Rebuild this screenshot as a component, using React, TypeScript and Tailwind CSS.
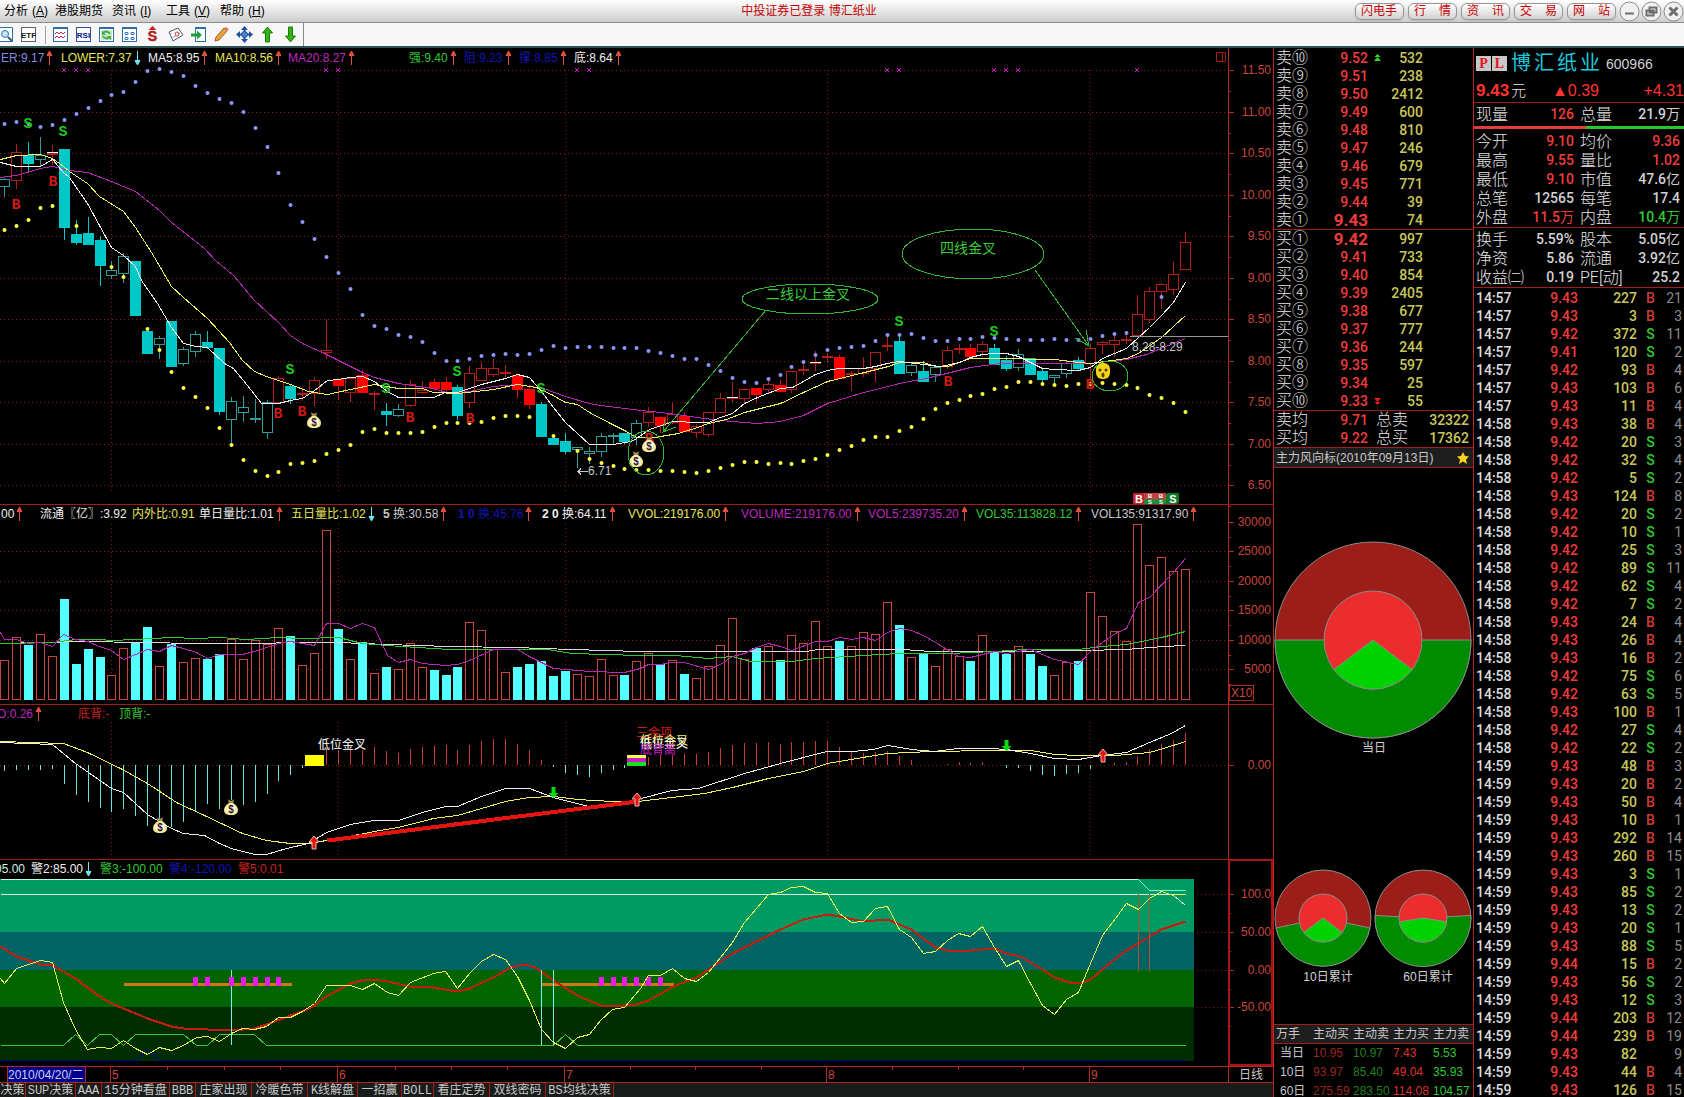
import type { ReactNode } from 'react'

type Kind = 'u' | 'h' | 'c' | 'r'
type Candle = [Kind, number, number, number, number]

const RED = '#b4281e'
const GRID = '#7d1c14'
const MONTHS = [9, 28, 47, 69, 91]

const barX = (i: number) => Math.round(4.1 + i * 11.93)

// kind, high, body top, body bottom, low
const candles: Candle[] = [
  ['h', 178, 179, 187, 197], ['u', 144, 152, 181, 189], ['c', 142, 155, 164, 172], ['h', 137, 155, 160, 167], ['u', 145, 153, 154, 165],
  ['c', 149, 149, 228, 240], ['c', 220, 234, 243, 245], ['c', 217, 233, 245, 245], ['c', 236, 240, 266, 286], ['h', 261, 270, 276, 279],
  ['h', 253, 256, 274, 283], ['c', 261, 261, 316, 316], ['c', 328, 331, 354, 354], ['h', 336, 338, 345, 359], ['c', 321, 321, 367, 367],
  ['h', 347, 349, 364, 366], ['h', 331, 334, 352, 357], ['c', 331, 342, 348, 349], ['c', 348, 348, 412, 415], ['h', 397, 401, 420, 445],
  ['h', 396, 407, 413, 422], ['h', 399, 418, 419, 423], ['h', 400, 402, 433, 439], ['u', 376, 378, 403, 403], ['c', 384, 386, 399, 404],
  ['u', 387, 393, 394, 401], ['u', 377, 380, 394, 406], ['u', 319, 350, 353, 359], ['r', 379, 379, 386, 400], ['u', 378, 378, 393, 402],
  ['r', 370, 375, 393, 393], ['u', 391, 393, 395, 410], ['c', 403, 411, 415, 426], ['h', 404, 409, 416, 417], ['u', 380, 384, 406, 407],
  ['u', 381, 390, 393, 394], ['r', 379, 382, 389, 391], ['r', 377, 382, 390, 393], ['c', 385, 387, 416, 420], ['u', 366, 373, 403, 408],
  ['u', 362, 368, 381, 381], ['u', 359, 368, 375, 377], ['u', 365, 372, 373, 379], ['r', 373, 375, 390, 398], ['r', 385, 389, 405, 409],
  ['c', 402, 404, 437, 437], ['c', 436, 438, 445, 445], ['c', 433, 441, 452, 454], ['h', 447, 447, 450, 468], ['h', 447, 451, 454, 464],
  ['h', 433, 436, 452, 457], ['h', 433, 435, 436, 444], ['c', 433, 433, 442, 444], ['h', 420, 423, 438, 445], ['u', 407, 412, 423, 427],
  ['r', 416, 417, 426, 433], ['u', 403, 414, 423, 424], ['r', 412, 416, 432, 432], ['u', 424, 426, 433, 438], ['u', 412, 412, 435, 437],
  ['u', 393, 398, 413, 413], ['u', 382, 397, 398, 402], ['u', 389, 389, 399, 402], ['r', 388, 388, 395, 403], ['u', 381, 384, 390, 393],
  ['r', 380, 385, 392, 392], ['u', 371, 371, 390, 393], ['u', 363, 369, 371, 375], ['u', 351, 362, 363, 371], ['u', 353, 356, 358, 363],
  ['r', 355, 357, 379, 379], ['u', 371, 373, 374, 391], ['u', 357, 368, 374, 377], ['u', 352, 352, 369, 382], ['u', 334, 345, 346, 351],
  ['c', 337, 341, 374, 374], ['h', 363, 365, 373, 376], ['c', 361, 371, 382, 382], ['h', 367, 367, 375, 382], ['u', 346, 350, 367, 369],
  ['u', 344, 348, 349, 354], ['r', 344, 348, 357, 357], ['u', 341, 344, 352, 357], ['c', 344, 348, 365, 365], ['c', 356, 360, 369, 371],
  ['h', 349, 354, 368, 371], ['c', 358, 358, 375, 375], ['c', 368, 371, 380, 382], ['h', 375, 375, 378, 383], ['h', 361, 363, 374, 378],
  ['c', 357, 360, 369, 371], ['u', 344, 348, 364, 388], ['u', 341, 342, 345, 354], ['u', 336, 340, 345, 357], ['u', 334, 339, 340, 344],
  ['u', 295, 314, 336, 336], ['u', 287, 291, 320, 323], ['u', 283, 284, 292, 309], ['u', 262, 274, 290, 295], ['u', 232, 242, 270, 270],
]

const upperDots = [
  124, 122, 124, 127, 125, 120, 114, 108, 101, 95, 92, 82, 71, 69, 72, 76, 86, 93, 99, 103, 112, 128, 147, 173, 205, 222, 239, 257, 273, 289,
  315, 326, 329, 335, 337, 342, 353, 361, 361, 359, 356, 355, 354, 355, 354, 350, 346, 348, 347, 347, 347, 348, 348, 348, 351, 353, 356, 359,
  359, 365, 371, 378, 382, 383, 379, 375, 367, 362, 355, 350, 348, 347, 346, 341, 335, 335, 334, 338, 341, 341, 339, 339, 337, 338, 339, 340,
  340, 340, 339, 340, 340, 339, 336, 334, 333, 0, 0, 297,
]

const lowerDots = [
  230, 226, 220, 208, 206, 0, 226, 0, 0, 267, 277, 0, 329, 350, 372, 388, 397, 408, 428, 445, 460, 471, 476, 472, 464, 463, 461, 454, 450, 445,
  432, 429, 433, 433, 433, 432, 427, 423, 423, 423, 422, 418, 416, 416, 417, 0, 436, 0, 451, 459, 463, 466, 469, 470, 470, 471, 471, 472, 473,
  471, 468, 465, 462, 462, 464, 463, 464, 461, 459, 455, 450, 446, 440, 437, 437, 431, 427, 419, 409, 403, 400, 396, 394, 389, 387, 382, 382,
  384, 385, 386, 384, 384, 383, 384, 385, 388, 395, 398, 403, 412,
]

const ma5 =
  '0,162 16,166 40,166 52,159 63,172 69,177 87,203 99,225 111,247 123,255 135,266 141,280 157,303 171,327 183,343 196,346 207,347 224,363 233,368 247,385 261,403 278,403 290,400 302,398 314,390 327,380 338,379 350,377 362,376 374,381 387,391 398,397 410,397 433,397 445,392 457,392 469,388 481,384 505,378 517,374 529,377 541,391 553,407 565,422 577,433 589,444 612,444 631,441 636,438 649,429 673,421 697,422 708,422 720,417 732,413 744,403 757,397 780,388 792,387 803,381 815,374 827,370 839,368 863,368 875,366 887,363 899,361 923,364 940,366 959,362 970,357 982,354 994,353 1006,353 1018,356 1030,362 1042,368 1054,369 1078,370 1090,367 1102,358 1126,348 1138,337 1149,327 1161,315 1173,302 1185,282'
const ma10 =
  '0,159 16,155 40,154 52,158 63,166 69,171 87,183 99,196 123,211 135,227 151,252 157,262 171,286 183,297 207,318 229,342 242,360 254,371 266,376 290,384 308,391 327,394 350,389 374,384 398,388 422,388 433,392 457,393 493,389 517,384 535,387 551,394 565,402 577,404 589,412 612,424 626,431 636,437 654,437 678,433 697,427 708,423 726,419 744,412 780,403 803,392 827,381 860,373 888,366 899,362 923,362 935,366 947,366 970,358 994,358 1054,359 1078,362 1090,363 1126,358 1138,353 1161,337 1185,315'
const ma20 =
  '0,177 16,175 40,168 52,166 69,170 87,172 111,181 135,191 159,210 171,222 204,248 215,260 233,275 254,300 278,322 290,335 302,343 326,354 362,372 374,377 398,383 433,388 449,393 469,391 493,386 517,384 543,388 565,396 589,403 600,405 640,410 661,412 697,417 720,420 757,423 780,421 803,415 827,403 860,393 899,383 930,377 970,367 999,363 1042,363 1066,363 1090,363 1126,359 1146,354 1185,338'

// bar tops
const volumes = [
  660, 637, 645, 634, 656, 599, 664, 649, 657, 675, 648, 642, 627, 666, 644, 662, 658, 659, 654, 639, 659, 640, 644, 628, 636, 665, 653, 530,
  629, 659, 642, 673, 667, 669, 643, 667, 670, 675, 667, 622, 630, 649, 672, 667, 664, 661, 676, 671, 674, 676, 659, 675, 675, 661, 653, 664,
  660, 674, 678, 666, 645, 618, 659, 648, 646, 660, 635, 643, 621, 646, 641, 646, 632, 634, 602, 625, 657, 653, 666, 649, 656, 661, 635, 652,
  654, 646, 654, 666, 675, 662, 661, 592, 616, 631, 641, 524, 565, 557, 571, 569,
]
const fallingVolumes = new Set([
  2, 5, 6, 7, 8, 11, 12, 14, 17, 18, 24, 28, 30, 32, 36, 37, 38, 43, 44, 45, 46, 47, 52, 55, 57, 63, 65, 70, 75, 77, 81, 83, 84, 86, 87, 90,
])

const vol5 =
  '0,632 4,639 16,639 28,643 40,642 52,646 63,634 75,639 87,641 99,646 111,650 123,659 135,654 147,649 159,651 171,645 183,648 196,652 207,658 219,654 242,654 254,651 266,647 278,643 290,641 314,645 326,623 338,623 350,628 362,623 374,627 387,655 398,662 410,659 422,663 445,665 457,664 469,660 493,649 517,649 529,656 553,668 589,671 624,672 640,668 648,664 660,664 672,662 684,662 708,669 720,664 732,656 744,653 756,647 768,643 780,646 791,650 815,641 827,641 839,637 851,639 863,637 875,640 887,632 899,628 911,630 923,635 935,642 958,656 970,657 994,651 1006,653 1030,649 1054,659 1078,664 1090,651 1102,642 1115,633 1126,628 1138,602 1149,597 1173,572 1185,558'
const vol35 =
  '0,643 52,642 75,639 99,639 111,640 135,639 171,637 196,638 220,637 245,639 278,637 302,638 338,637 362,643 386,645 449,649 490,649 547,649 571,653 640,655 675,655 708,658 732,656 750,661 791,661 815,658 863,655 899,653 948,653 994,651 1024,649 1078,649 1102,646 1126,644 1161,637 1185,631'
const vol135 =
  '0,643 82,641 143,642 196,643 261,643 290,642 338,642 386,644 449,646 514,647 571,649 640,651 805,651 818,649 902,649 931,651 999,651 1083,650 1125,649 1163,646 1185,645'

// histogram ends, 0 for none
const macdBars = [
  771, 770, 770, 770, 769, 784, 795, 802, 808, 812, 809, 816, 826, 820, 827, 822, 811, 804, 809, 800, 805, 802, 794, 781, 775, 768, 0, 749, 750,
  750, 750, 747, 751, 753, 749, 747, 746, 745, 750, 745, 741, 739, 739, 744, 750, 760, 767, 773, 775, 777, 773, 770, 768, 0, 757, 755, 755, 754,
  754, 752, 748, 745, 743, 743, 742, 744, 742, 742, 741, 741, 747, 752, 753, 752, 751, 756, 760, 0, 0, 764, 762, 763, 762, 0, 768, 768, 771,
  775, 776, 774, 773, 769, 0, 763, 762, 756, 749, 744, 740, 733,
]
const dif =
  '0,742 52,744 75,763 111,788 123,792 147,814 171,828 183,833 204,835 219,843 231,848 254,854 266,854 286,848 308,843 326,832 350,824 374,820 398,820 422,812 445,806 457,806 481,796 505,788 529,788 553,797 588,806 612,804 637,799 671,790 698,788 744,773 780,763 826,751 852,751 873,749 887,745 911,749 934,751 957,748 990,748 1006,749 1030,753 1054,758 1078,759 1102,755 1126,752 1149,742 1171,733 1185,725'
const dea =
  '0,741 63,743 87,752 122,769 147,783 176,802 204,815 242,833 266,840 290,843 308,843 338,838 374,831 398,827 433,818 457,815 481,808 505,801 529,797 553,796 577,799 612,801 637,801 671,797 704,793 732,787 768,778 803,771 827,763 868,756 887,753 931,751 990,750 1030,750 1054,754 1078,755 1115,755 1149,752 1163,748 1185,741'

const cciSlow =
  '0,946 16,956 40,964 52,965 75,978 99,996 111,1003 123,1008 147,1018 171,1026 183,1028 207,1029 231,1030 254,1028 266,1024 290,1015 302,1011 314,1005 326,996 350,983 362,980 374,979 387,981 410,986 433,987 457,991 469,988 493,977 510,967 524,964 535,967 553,980 577,995 600,1005 620,1006 636,1004 648,1000 673,986 696,977 732,953 744,947 780,929 803,919 827,914 839,916 863,921 887,919 911,929 935,947 946,950 970,950 994,948 1006,953 1020,956 1030,962 1042,969 1054,977 1072,983 1083,982 1090,979 1102,969 1115,958 1126,950 1149,936 1161,929 1185,921'
const cciFast =
  '0,978 4,983 16,968 40,960 52,962 63,1002 75,1029 87,1049 99,1047 111,1048 123,1040 135,1048 147,1054 159,1047 171,1050 183,1045 196,1037 207,1036 219,1041 231,1033 242,1028 254,1029 266,1026 278,1017 290,1017 302,1011 314,1003 326,985 338,985 350,985 362,989 374,983 387,992 398,995 410,982 433,973 445,971 457,988 469,973 481,961 493,954 505,959 517,976 529,1000 541,1029 553,1042 565,1048 577,1037 589,1034 600,1020 612,1009 624,1007 640,988 648,975 660,975 672,968 684,978 696,981 708,972 732,942 744,922 768,894 780,892 791,887 803,886 815,892 827,893 839,913 851,922 863,921 875,908 887,906 899,929 911,937 923,953 935,951 947,940 958,933 970,936 982,926 994,947 1006,966 1018,960 1030,983 1042,1005 1054,1014 1066,999 1078,992 1090,963 1102,935 1115,918 1126,903 1138,909 1149,898 1161,891 1173,895'
const signalLine =
  '0,1045 63,1045 75,1034 87,1045 99,1034 111,1034 123,1045 135,1034 183,1034 196,1045 207,1045 219,1034 254,1034 266,1045 553,1045 565,1034 577,1045 1185,1045'

function Grid({ ys, top, bottom, from = 0 }: { ys: number[]; top: number; bottom: number; from?: number }) {
  return (
    <g stroke={GRID} strokeDasharray="1 3">
      {ys.map((y) => <line key={y} x1={from} x2="1228" y1={y + 0.5} y2={y + 0.5} />)}
      {from === 0 && MONTHS.map((m) => <line key={m} x1={barX(m) + 0.5} x2={barX(m) + 0.5} y1={top} y2={bottom} />)}
    </g>
  )
}

function Axis({ labels, top, bottom, half }: { labels: [number, string][]; top: number; bottom: number; half: number }) {
  return (
    <g>
      <line x1="1228.5" x2="1228.5" y1={top} y2={bottom} stroke={RED} />
      {labels.map(([y, text]) => (
        <g key={text}>
          <line x1="1228" x2="1234" y1={y + 0.5} y2={y + 0.5} stroke={RED} />
          {half > 0 && <line x1="1228" x2="1231" y1={y + half + 0.5} y2={y + half + 0.5} stroke={RED} />}
          <text x="1271" y={y + 4} textAnchor="end" fontSize="12" fill="#c8463c">{text}</text>
        </g>
      ))}
    </g>
  )
}

function Line({ points, color, width = 1 }: { points: string; color: string; width?: number }) {
  return <polyline points={points} transform="translate(0.5 0.5)" fill="none" stroke={color} strokeWidth={width} />
}

function MoneyBag({ x, y }: { x: number; y: number }) {
  return (
    <g transform={`translate(${x - 7} ${y - 8})`} shapeRendering="auto">
      <path d="M4 0.5 L7 2 L10 0.5 L9 4 L5 4 Z" fill="#b9a06a" stroke="#6e5a28" strokeWidth="0.5" />
      <path d="M5 4 h4 c3 2 5 4 5 7 c0 3-2 5-7 5 s-7-2-7-5 c0-3 2-5 5-7z" fill="#f3ec9a" />
      <circle cx="7" cy="10" r="4" fill="#fff" />
      <text x="7" y="14" textAnchor="middle" fontSize="10" fontWeight="700" fill="#3c1414">$</text>
    </g>
  )
}

function UpMark({ x, y }: { x: number; y: number }) {
  return <path d={`M${x} ${y - 6} l5 6 h-3 v7 h-4 v-7 h-3 z`} fill="#e6140a" stroke="#f0b4b4" shapeRendering="auto" />
}

function DownMark({ x, y }: { x: number; y: number }) {
  return <path d={`M${x + 0.5} ${y + 5} l-5 -5 h3 v-6 h4 v6 h3 z`} fill="#00dc14" shapeRendering="auto" />
}

function CandleShape({ c, i }: { c: Candle; i: number }) {
  const [kind, high, top, bottom, low] = c
  const x = barX(i)
  const stroke = kind === 'u' ? '#b41e16' : kind === 'r' ? '#ff0000' : kind === 'c' ? '#00c8c8' : '#2f9c9c'
  const filled = kind === 'c' || kind === 'r'
  return (
    <g>
      <line x1={x + 0.5} x2={x + 0.5} y1={high} y2={low} stroke={kind === 'r' ? '#d21410' : stroke} />
      {filled ? (
        <rect x={x - 5} y={top} width="11" height={bottom - top} fill={stroke} />
      ) : bottom - top < 2 ? (
        <line x1={x - 5} x2={x + 6} y1={top + 0.5} y2={top + 0.5} stroke={stroke} strokeWidth="2" />
      ) : (
        <rect x={x - 4.5} y={top + 0.5} width="10" height={bottom - top - 1} fill="#000" stroke={stroke} />
      )}
    </g>
  )
}

function PriceChart() {
  const levels = Array.from({ length: 11 }, (_, i): [number, string] => [Math.round(70.3 + i * 41.5), (11.5 - i * 0.5).toFixed(2)])
  const sells = [[28, 123], [63, 131], [290, 369], [386, 388], [457, 371], [541, 388], [899, 321], [994, 331]]
  const buys = [[16, 204], [53, 181], [278, 413], [302, 411], [410, 417], [470, 418], [649, 438], [948, 381], [1090, 384]]
  return (
    <svg viewBox="0 68 1273 436" className="block h-auto w-full shrink-0 overflow-visible" shapeRendering="crispEdges">
      <Grid ys={levels.map((l) => l[0])} top={70} bottom={494} />
      <Axis labels={levels} top={68} bottom={504} half={21} />

      {candles.map((c, i) => <CandleShape key={i} c={c} i={i} />)}
      <Line points={ma20} color="#b428b4" />
      <Line points={ma10} color="#f0f064" />
      <Line points={ma5} color="#f0f0f0" />
      {[[52, 152], [732, 397], [815, 362]].map(([x, y]) => (
        <line key={x} x1={x - 5} x2={x + 6} y1={y + 0.5} y2={y + 0.5} stroke="#fff" />
      ))}

      <g fill="#8c96ff" shapeRendering="auto">
        {upperDots.map((y, i) => y > 0 && <circle key={i} cx={barX(i) + 0.5} cy={y} r="2" />)}
      </g>
      <g fill="#ffff46" shapeRendering="auto">
        {lowerDots.map((y, i) => y > 0 && <circle key={i} cx={barX(i) + 0.5} cy={y} r="2" />)}
      </g>
      <g stroke="#c81ec8">
        {[5, 6, 7, 27, 28, 48, 49, 74, 75, 83, 84, 85, 95].map((i) => (
          <path key={i} d={`M${barX(i) - 2} 68 l4 4 m0 -4 l-4 4`} shapeRendering="auto" />
        ))}
      </g>

      <g className="font-['Liberation_Mono',monospace]" fontSize="15" fontWeight="700" textAnchor="middle">
        {sells.map(([x, y]) => <text key={x} x={x} y={y + 5} fill="#1ec81e">S</text>)}
        {buys.map(([x, y]) => <text key={x} x={x} y={y + 5} fill="#d21914">B</text>)}
      </g>

      <line x1="1130" x2="1228" y1="336.5" y2="336.5" stroke="#969696" />
      <text x="1132" y="351" fontSize="12" fill="#c8c8c8">8.28-8.29</text>
      <path d="M578 471.5 h10 m-7 -3 l-3 3 l3 3" fill="none" stroke="#c8c8c8" />
      <text x="588" y="475" fontSize="12" fill="#c8c8c8">6.71</text>

      <MoneyBag x={314} y={420} />
      <MoneyBag x={636} y={459} />
      <g shapeRendering="auto">
        <rect x="1096" y="363" width="14" height="16" rx="6" fill="#f5d214" />
        <circle cx="1100" cy="370" r="1.5" fill="#503c00" />
        <circle cx="1106" cy="370" r="1.5" fill="#503c00" />
        <ellipse cx="1103" cy="375" rx="1.5" ry="2.5" fill="#503c00" />
      </g>
      <MoneyBag x={649} y={444} />

      <g fill="none" stroke="#32b432">
        <ellipse cx="973" cy="254" rx="71" ry="25" />
        <ellipse cx="810" cy="299" rx="68" ry="15" />
        <ellipse cx="646" cy="453" rx="18" ry="22" />
        <ellipse cx="1110" cy="376" rx="18" ry="15" />
        <path d="M766 310 L663 432 M665 419 L663 432 L676 427" />
        <path d="M1035 270 L1089 346 M1086 330 L1089 346 L1075 338" />
      </g>
      <g fill="#3cc83c" fontSize="14">
        <text x="940" y="253">四线金叉</text>
        <text x="766" y="299">二线以上金叉</text>
      </g>

      <g fontWeight="700" fill="#fff" textAnchor="middle">
        <rect x="1133" y="493" width="11" height="11" fill="#c81e28" />
        <rect x="1144" y="493" width="11" height="6" fill="#c83c46" />
        <rect x="1155" y="493" width="11" height="6" fill="#c83c46" />
        <rect x="1144" y="499" width="22" height="5" fill="#1e8c3c" />
        <rect x="1166" y="493" width="13" height="11" rx="2" fill="#0a7828" />
        <text x="1139" y="503" fontSize="11">B</text>
        <text x="1150" y="498" fontSize="6">B</text>
        <text x="1161" y="498" fontSize="6">B</text>
        <text x="1150" y="504" fontSize="6">S</text>
        <text x="1161" y="504" fontSize="6">S</text>
        <text x="1173" y="503" fontSize="11">S</text>
      </g>
    </svg>
  )
}

function VolumeChart() {
  return (
    <svg viewBox="0 522 1273 182" className="block h-auto w-full shrink-0 overflow-visible" shapeRendering="crispEdges">
      <Grid ys={[551, 581, 610, 640, 669]} top={524} bottom={700} />
      <Axis
        labels={[[522, '30000'], [551, '25000'], [581, '20000'], [610, '15000'], [640, '10000'], [669, '5000']]}
        top={522}
        bottom={704}
        half={15}
      />
      {volumes.map((y, i) =>
        fallingVolumes.has(i) ? (
          <rect key={i} x={barX(i) - 4} y={y} width="9" height={700 - y} fill="#54ffff" />
        ) : (
          <rect key={i} x={barX(i) - 3.5} y={y + 0.5} width="8" height={699 - y} fill="#000" stroke="#c8463c" />
        ),
      )}
      <Line points={vol135} color="#dcdcdc" />
      <Line points={vol35} color="#32c832" />
      <Line points={vol5} color="#b428b4" />
      <rect x="1229.5" y="685.5" width="24" height="15" fill="none" stroke={RED} />
      <text x="1231" y="697" fontSize="12" fill="#c8463c">X10</text>
    </svg>
  )
}

function MacdChart() {
  return (
    <svg viewBox="0 722 1273 137" className="block h-auto w-full shrink-0" shapeRendering="crispEdges">
      <Grid ys={[765]} top={722} bottom={858} />
      <Axis labels={[[765, '0.00']]} top={722} bottom={859} half={0} />
      {macdBars.map((y, i) => y > 0 && (
        <line key={i} x1={barX(i) + 0.5} x2={barX(i) + 0.5} y1="765" y2={y} stroke={y > 765 ? '#6ee1e1' : '#c83c32'} />
      ))}
      <Line points={dea} color="#f0f064" />
      <Line points={dif} color="#f0f0f0" />
      <Line points="327,840 637,801" color="#e6140f" width={4} />
      <rect x="305" y="755" width="19" height="11" fill="#ffff00" />
      <rect x="627" y="755" width="19" height="3" fill="#ffff46" />
      <rect x="627" y="758" width="19" height="4" fill="#c81ec8" />
      <rect x="627" y="762" width="19" height="4" fill="#1edc1e" />
      <g fontSize="12">
        <text x="318" y="749" fill="#fff">低位金叉</text>
        <text x="636" y="737" fill="#d21914">三金项</text>
        <text x="640" y="745" fill="#f0f064">低位金叉</text>
        <text x="640" y="748" fill="#fff">低位金叉</text>
        <text x="640" y="754" fill="#c81ec8">底背离</text>
      </g>
      <MoneyBag x={160} y={825} />
      <MoneyBag x={231} y={807} />
      <UpMark x={314} y={842} />
      <UpMark x={637} y={799} />
      <UpMark x={1103} y={755} />
      <DownMark x={553} y={793} />
      <DownMark x={1006} y={746} />
    </svg>
  )
}

function CciChart() {
  return (
    <svg viewBox="0 877 1273 189" className="block h-auto w-full shrink-0 overflow-visible" shapeRendering="crispEdges">
      <rect x="0" y="879" width="1194" height="53" fill="#009b62" />
      <rect x="0" y="932" width="1194" height="38" fill="#006464" />
      <rect x="0" y="970" width="1194" height="37" fill="#006400" />
      <rect x="0" y="1007" width="1194" height="54" fill="#002d00" />
      <Grid ys={[894, 932, 970, 1007]} top={877} bottom={1066} from={1197} />
      <Axis labels={[[894, '100.0'], [932, '50.00'], [970, '0.00'], [1007, '-50.00']]} top={877} bottom={1066} half={19} />
      <rect x="1229" y="860" width="43" height="205" fill="none" stroke="#aa1414" strokeWidth="2" />

      <Line points="0,894 1185,894" color="#d2f0e1" />
      <Line points="0,879 1138,879" color="#c8f5e1" />
      <Line points="1138,879 1149,890 1185,890" color="#6ef5c8" />
      <Line points="1173,894 1185,894" color="#f0f064" />
      <Line points="0,1060 135,1060 147,1049 159,1060 1185,1060" color="#000a8c" />
      <Line points={signalLine} color="#3cc83c" />
      <Line points="123,984 291,984" color="#cd7814" width={3} />
      <Line points="541,984 673,984" color="#cd7814" width={3} />
      <Line points={cciSlow} color="#c31e0f" width={2} />
      <g stroke="#78f0e6">
        {[231, 541, 553].map((x) => <line key={x} x1={x + 0.5} x2={x + 0.5} y1="970" y2="1045" />)}
      </g>
      <g stroke="#b45032">
        {[1138, 1149].map((x) => <line key={x} x1={x + 0.5} x2={x + 0.5} y1="894" y2="971" />)}
      </g>
      <g fill="#e61ee6">
        {[16, 17, 19, 20, 21, 22, 23, 50, 51, 52, 53, 54, 55].map((i) => (
          <rect key={i} x={barX(i) - 2} y="977" width="5" height="9" />
        ))}
      </g>
      <Line points={cciFast} color="#e6f050" />
      <Line points="1173,895 1185,905" color="#d2f0e1" />
    </svg>
  )
}

function DateScale() {
  return (
    <svg viewBox="0 1066 1273 17" className="block h-auto w-full shrink-0 overflow-visible" shapeRendering="crispEdges" fontSize="12">
      <path d="M0 1066.5 H1273 M0 1082.5 H1273 M1228.5 1066 V1083" stroke={RED} />
      <g stroke={RED}>
        {[167, 224, 280, 395, 451, 507, 630, 695, 761, 892, 958, 1023].map((x) => (
          <line key={x} x1={x + 0.5} x2={x + 0.5} y1="1066" y2="1070" />
        ))}
      </g>
      {MONTHS.map((m, i) => (
        <g key={m}>
          <line x1={barX(m) - 0.5} x2={barX(m) - 0.5} y1="1066" y2="1083" stroke={RED} />
          <text x={barX(m) + 1} y="1079" fill="#c8463c">{i + 5}</text>
        </g>
      ))}
      <rect x="7.5" y="1066.5" width="78" height="16" fill="#00008c" stroke={RED} />
      <text x="8" y="1079" fill="#c8d2ff">2010/04/20/二</text>
      <text x="1239" y="1079" fill="#c8c8c8">日线</text>
    </svg>
  )
}

interface Reading {
  text: ReactNode
  color: string
  width: string
  arrow?: 'up' | 'down'
}

const priceReadings: Reading[] = [
  { text: 'ER:9.17', color: 'text-[#828cdc]', width: 'w-[60px]', arrow: 'up' },
  { text: 'LOWER:7.37', color: 'text-[#e6e65a]', width: 'w-[87px]', arrow: 'down' },
  { text: 'MA5:8.95', color: 'text-[#f0f0f0]', width: 'w-[67px]', arrow: 'up' },
  { text: 'MA10:8.56', color: 'text-[#e6e65a]', width: 'w-[73px]', arrow: 'up' },
  { text: 'MA20:8.27', color: 'text-[#be28be]', width: 'w-[121px]', arrow: 'up' },
  { text: '强:9.40', color: 'text-[#32c832]', width: 'w-[55px]', arrow: 'up' },
  { text: '阻:9.23', color: 'text-[#1414b4]', width: 'w-[55px]', arrow: 'up' },
  { text: '撑:8.85', color: 'text-[#1414b4]', width: 'w-[55px]', arrow: 'up' },
  { text: '底:8.64', color: 'text-[#f0f0f0]', width: 'w-[55px]', arrow: 'up' },
]

const volumeReadings: Reading[] = [
  { text: '00', color: 'text-[#f0f0f0]', width: 'w-[39px]', arrow: 'up' },
  { text: '流通〖亿〗:3.92', color: 'text-[#f0f0f0]', width: 'w-[92px]' },
  { text: '内外比:0.91', color: 'text-[#e6e65a]', width: 'w-[67px]' },
  { text: '单日量比:1.01', color: 'text-[#f0f0f0]', width: 'w-[92px]', arrow: 'up' },
  { text: '五日量比:1.02', color: 'text-[#e6e65a]', width: 'w-[92px]', arrow: 'down' },
  { text: <><b>5 </b>换:30.58</>, color: 'text-[#c8c8c8]', width: 'w-[75px]', arrow: 'up' },
  { text: <><b>1 0 </b>换:45.76</>, color: 'text-[#1414b4]', width: 'w-[84px]', arrow: 'up' },
  { text: <><b>2 0 </b>换:64.11</>, color: 'text-[#f0f0f0]', width: 'w-[86px]', arrow: 'up' },
  { text: 'VVOL:219176.00', color: 'text-[#e6e65a]', width: 'w-[113px]', arrow: 'up' },
  { text: 'VOLUME:219176.00', color: 'text-[#be28be]', width: 'w-[127px]', arrow: 'up' },
  { text: 'VOL5:239735.20', color: 'text-[#be28be]', width: 'w-[108px]', arrow: 'up' },
  { text: 'VOL35:113828.12', color: 'text-[#32c832]', width: 'w-[115px]', arrow: 'up' },
  { text: 'VOL135:91317.90', color: 'text-[#c8c8c8]', width: 'w-[115px]', arrow: 'up' },
]

const macdReadings: Reading[] = [
  { text: 'O:0.26', color: 'text-[#be28be]', width: '-ml-1 w-[81px]', arrow: 'up' },
  { text: '底背:-', color: 'text-[#c8231e]', width: 'w-[41px]' },
  { text: '顶背:-', color: 'text-[#32c832]', width: 'w-[41px]' },
]

const cciReadings: Reading[] = [
  { text: '05.00', color: 'text-[#c8f0e1]', width: '-ml-1.5 w-[36px]' },
  { text: '警2:85.00', color: 'text-[#f0f0f0]', width: 'w-[69px]', arrow: 'down' },
  { text: '警3:-100.00', color: 'text-[#32c832]', width: 'w-[69px]' },
  { text: '警4:-120.00', color: 'text-[#1414b4]', width: 'w-[69px]' },
  { text: '警5:0.01', color: 'text-[#c8231e]', width: 'w-[69px]' },
]

function Trend({ dir }: { dir: 'up' | 'down' }) {
  return dir === 'up' ? (
    <svg width="7" height="14" className="shrink-0"><path d="M3.5 14 V4 M3.5 0 L1 4.5 H6 Z" stroke="#e0503c" fill="#e0503c" strokeWidth="1" /></svg>
  ) : (
    <svg width="7" height="14" className="shrink-0"><path d="M3.5 0 V10 M3.5 14 L1 9.5 H6 Z" stroke="#6ee6f0" fill="#6ee6f0" strokeWidth="1" /></svg>
  )
}

function Readings({ items, first = false }: { items: Reading[]; first?: boolean }) {
  return (
    <div className={first ? 'flex h-5 shrink-0' : 'flex h-[18px] shrink-0 border-t border-[#a01e14]'}>
      <div className="flex min-w-0 flex-1 items-center overflow-hidden pl-px leading-4">
        {items.map((r, i) => (
          <div key={i} className={`flex shrink-0 items-center gap-0.5 whitespace-nowrap ${r.width} ${r.color}`}>
            <span>{r.text}</span>
            {r.arrow && <Trend dir={r.arrow} />}
          </div>
        ))}
      </div>
      {first && (
        <svg width="10" height="10" className="mt-1 mr-0.5 shrink-0">
          <path d="M0.5 0.5 H9.5 V9.5 H0.5 Z M6.5 0 V10" fill="none" stroke="#a01e14" />
        </svg>
      )}
      <div className="w-[45px] border-l border-[#b4281e]" />
    </div>
  )
}

const menus: [string, string, string][] = [
  ['分析', 'A', 'w-[51px]'],
  ['港股期货', '', 'w-[57px]'],
  ['资讯', 'I', 'w-[54px]'],
  ['工具', 'V', 'w-[54px]'],
  ['帮助', 'H', 'w-[54px]'],
]

function MenuBar() {
  return (
    <div className="flex h-[23px] shrink-0 items-center justify-between border-b border-[#8c8c8c] bg-gradient-to-b from-white to-[#cdcdcd] pl-1 text-black">
      <nav className="flex flex-1 leading-5">
        {menus.map(([label, key, width]) => (
          <button key={label} className={`text-left whitespace-nowrap ${width}`}>
            {label}
            {key && <span className="pl-1">(<u>{key}</u>)</span>}
          </button>
        ))}
      </nav>
      <div className="pr-[68px] leading-5 text-[#c80000]">中投证券已登录 博汇纸业</div>
      <div className="flex flex-1 items-center justify-end gap-1 pr-0.5">
        {['闪电手', '行情', '资讯', '交易', '网站'].map((t) => (
          <button
            key={t}
            className="flex h-[17px] w-[49px] shrink-0 items-center justify-between rounded-md border border-[#969696] bg-gradient-to-b from-white to-[#d2d2d2] px-[5px] leading-4 whitespace-nowrap text-[#c80000] shadow-sm"
          >
            {t.length === 2 ? [...t].map((ch) => <span key={ch}>{ch}</span>) : t}
          </button>
        ))}
        <WindowButton label="最小化"><path d="M6 12.5 H15" /></WindowButton>
        <WindowButton label="还原"><path d="M8.5 6.5 H15.5 V11.5 H8.5 Z M5.5 9.5 H12.5 V14.5 H5.5 Z" fill="#e6e6e6" /></WindowButton>
        <WindowButton label="关闭"><path d="M6.5 6.5 L14.5 14.5 M14.5 6.5 L6.5 14.5" strokeWidth="3" /></WindowButton>
      </div>
    </div>
  )
}

function WindowButton({ label, children }: { label: string; children: ReactNode }) {
  return (
    <button aria-label={label} className="h-[21px] w-[18px] shrink-0">
      <svg width="21" height="21" className="-ml-px">
        <circle cx="10.5" cy="10.5" r="9.5" fill="#f0f0f0" stroke="#8c8c8c" />
        <g stroke="#6e6e6e" strokeWidth="2" fill="none">{children}</g>
      </svg>
    </button>
  )
}

function Frame({ children }: { children?: ReactNode }) {
  return (
    <>
      <rect x="1.5" y="1.5" width="14" height="14" fill="#fff" stroke="#2d6eaa" />
      <rect x="1" y="1" width="15" height="2" fill="#2d6eaa" />
      {children}
    </>
  )
}

const toolIcons: [string, ReactNode][] = [
  ['ETF', <><rect x="1.5" y="1.5" width="14" height="14" fill="#fff" stroke="#5a6478" /><text x="8.5" y="12" textAnchor="middle" fontSize="8" fontWeight="700" fill="#281414">ETF</text></>],
  ['走势', <Frame><path d="M3 8 l2 -2 2 2 2 -2 2 2 2 -2 M3 12 l2 -2 2 2 2 -2 2 2 2 -2" fill="none" stroke="#b42850" /></Frame>],
  ['RSI', <><rect x="1.5" y="1.5" width="14" height="14" fill="#fff" stroke="#2d50aa" /><text x="8.5" y="12" textAnchor="middle" fontSize="8" fontWeight="700" fill="#0a1478">RSI</text></>],
  ['刷新', <Frame><rect x="3" y="4" width="11" height="10" fill="#c8e6c8" /><path d="M12 8 a4 3.5 0 0 0 -7 -1 M5 10 a4 3.5 0 0 0 7 1" fill="none" stroke="#46aa50" strokeWidth="2" /><path d="M4 5 v4 h4 z M13 14 v-4 h-4 z" fill="#46aa50" /></Frame>],
  ['列表', <Frame><path d="M4 6.5 h3 v2 h-3 z M10 6.5 h3 v2 h-3 z M4 11.5 h3 v2 h-3 z M10 11.5 h3 v2 h-3 z" fill="#fff" stroke="#3c78b4" /></Frame>],
  ['交易', <><path d="M8.5 0 l4 4 h-8 z" fill="#c81e1e" /><text x="8.5" y="15" textAnchor="middle" fontSize="14" fontWeight="700" fill="#c81e1e" stroke="#961414" strokeWidth="0.5">S</text></>],
  ['信件', <><path d="M2 6 L11 2 L16 9 L6 15 Z" fill="#fff" stroke="#505a82" /><path d="M3 8 l2 -1 M5 12 l8 -5" fill="none" stroke="#a0aac8" /><circle cx="10" cy="8" r="2" fill="#fff" stroke="#d23c3c" /></>],
  ['转到', <><rect x="5.5" y="1.5" width="10" height="14" fill="#fff" stroke="#2d6eaa" /><rect x="5" y="1" width="11" height="2" fill="#2d6eaa" /><path d="M1 7.5 h6 v-3 l5 4.5 -5 4.5 v-3 h-6 z" fill="#1ea03c" /></>],
  ['画线', <><path d="M2 15 l1 -4 8 -9 3 3 -8 9 z" fill="#e6a03c" stroke="#a0641e" /><path d="M11 2 l3 3 2 -2 -3 -2 z" fill="#e67878" /></>],
  ['移动', <><path d="M8.5 0 l3.500 4 h-7 z M8.5 17 l3.500 -4 h-7 z M0 8.5 l4 -3.500 v7 z M17 8.5 l-4 -3.500 v7 z" fill="#1e50a0" /><path d="M8.5 4 V13 M4 8.5 H13" stroke="#1e50a0" strokeWidth="2" /><circle cx="8.5" cy="8.5" r="3" fill="#5082c8" stroke="#1e50a0" /></>],
  ['上移', <path d="M8.5 1 l5 6 h-3 v9 h-4 v-9 h-3 z" fill="#32b414" stroke="#1e780a" />],
  ['下移', <path d="M8.5 16 l5 -6 h-3 v-9 h-4 v9 h-3 z" fill="#32b414" stroke="#1e780a" />],
]

function ToolBar() {
  return (
    <div className="flex h-[25px] shrink-0 items-center border-b-2 border-[#2d5050] bg-[#f7f7f7]">
      <button aria-label="查询" className="w-[14px]">
        <svg width="14" height="17">
          <path d="M-2 1.5 H12.5 V15.5 H-2" fill="#fff" stroke="#2d6eaa" />
          <circle cx="5" cy="8" r="3.5" fill="#c8e1f5" stroke="#2878aa" />
          <path d="M8 11 l4 4" stroke="#3c5a78" strokeWidth="2" />
        </svg>
      </button>
      {toolIcons.map(([name, icon], i) => (
        <div key={name} className="flex items-center">
          <button aria-label={name} className="ml-1.5 w-[17px]">
            <svg width="17" height="17">{icon}</svg>
          </button>
          {i === 0 && <div className="ml-2 h-[18px] w-px bg-[#a0a0a0]" />}
        </div>
      ))}
      <div className="ml-1 h-full w-px bg-[#8c8c8c]" />
    </div>
  )
}

const tabs: [string, string][] = [
  ['决策', 'w-[26px]'], ['SUP决策', 'w-[50px]'], ['AAA', 'w-[26px]'], ['15分钟看盘', 'w-[68px]'], ['BBB', 'w-[26px]'], ['庄家出现', 'w-[56px]'],
  ['冷暖色带', 'w-[56px]'], ['K线解盘', 'w-[50px]'], ['一招赢', 'w-[44px]'], ['BOLL', 'w-[32px]'], ['看庄定势', 'w-[56px]'], ['双线密码', 'w-[56px]'],
  ['BS均线决策', 'w-[68px]'],
]

function TabStrip() {
  return (
    <div className="flex min-h-[14px] flex-1 overflow-hidden bg-[#191c1a] font-['Liberation_Mono','Noto_Sans_CJK_SC',monospace] text-[#c8c8c8]">
      {tabs.map(([name, width]) => (
        <button key={name} className={`flex h-4 justify-center border-r border-[#a01e14] leading-4 whitespace-nowrap ${width}`}>
          {name}
        </button>
      ))}
    </div>
  )
}

const sellRows: [string, string, number][] = [
  ['⑩', '9.52', 532], ['⑨', '9.51', 238], ['⑧', '9.50', 2412], ['⑦', '9.49', 600], ['⑥', '9.48', 810],
  ['⑤', '9.47', 246], ['④', '9.46', 679], ['③', '9.45', 771], ['②', '9.44', 39], ['①', '9.43', 74],
]
const buyRows: [string, string, number][] = [
  ['①', '9.42', 997], ['②', '9.41', 733], ['③', '9.40', 854], ['④', '9.39', 2405], ['⑤', '9.38', 677],
  ['⑥', '9.37', 777], ['⑦', '9.36', 244], ['⑧', '9.35', 597], ['⑨', '9.34', 25], ['⑩', '9.33', 55],
]

function Depth({ side, rows }: { side: string; rows: [string, string, number][] }) {
  return (
    <table className="w-full table-fixed font-['Roboto','Noto_Sans_CJK_SC',sans-serif] text-sm leading-[18px] font-medium">
      <tbody>
        {rows.map(([level, price, volume]) => (
          <tr key={level} className="h-[18px]">
            <td className="w-[44px] p-0 pl-0.5 text-base leading-[18px] font-light whitespace-nowrap text-[#e6e6e6]">{side}{level}</td>
            <td className={`w-[50px] p-0 text-right text-[#f03c3c] ${level === '①' ? 'text-[17px] leading-[18px] font-bold' : ''}`}>{price}</td>
            <td className="w-[16px] p-0">
              {level === '⑩' && (
                <svg width="7" height="8" className={side === '卖' ? 'ml-1.5' : 'ml-1.5 rotate-180'}>
                  <path d="M3.5 0 L6.5 3 H0.5 Z M3.5 3 L7 7 H0 Z" fill={side === '卖' ? '#32dc32' : '#e61e14'} />
                </svg>
              )}
            </td>
            <td className="w-[39px] p-0 text-right text-[#c8c85a]">{volume}</td>
            <td />
          </tr>
        ))}
      </tbody>
    </table>
  )
}

const point = (cx: number, cy: number, r: number, deg: number) => {
  const a = (deg * Math.PI) / 180
  return `${(cx + r * Math.cos(a)).toFixed(1)} ${(cy + r * Math.sin(a)).toFixed(1)}`
}

// green sector opens downward, spanning from `start` to 180 - start degrees
function sector(cx: number, cy: number, r: number, start: number) {
  const large = 180 - 2 * start > 180 ? 1 : 0
  return `M${cx} ${cy} L${point(cx, cy, r, start)} A${r} ${r} 0 ${large} 1 ${point(cx, cy, r, 180 - start)} Z`
}

function Donut({ cx, cy, r, outer, inner }: { cx: number; cy: number; r: number; outer: number; inner: number }) {
  return (
    <g stroke="#8c8c8c">
      <circle cx={cx} cy={cy} r={r} fill="#9b1e19" />
      <path d={sector(cx, cy, r, outer)} fill="#008c00" />
      <circle cx={cx} cy={cy} r={Math.round(r / 2)} fill="#eb2d2d" />
      <path d={sector(cx, cy, Math.round(r / 2), inner)} fill="#00d200" />
    </g>
  )
}

function OrderPanel() {
  return (
    <section className="flex w-[200px] shrink-0 flex-col border-l border-[#b4281e] pt-px">
      <Depth side="卖" rows={sellRows} />
      <div className="h-px shrink-0 bg-[#a01e14]" />
      <Depth side="买" rows={buyRows} />
      <table className="w-full border-y border-[#a01e14] font-['Roboto','Noto_Sans_CJK_SC',sans-serif] text-sm leading-[18px] font-medium">
        <tbody>
          {[['卖均', '9.71', '总卖', 32322], ['买均', '9.22', '总买', 17362]].map(([a, price, b, total]) => (
            <tr key={a} className="h-[18px]">
              <td className="w-[44px] p-0 pl-0.5 text-base leading-[18px] font-light text-[#e6e6e6]">{a}</td>
              <td className="w-[50px] p-0 text-right text-[#f03c3c]">{price}</td>
              <td className="p-0 pl-2 text-base leading-[18px] font-light text-[#e6e6e6]">{b}</td>
              <td className="w-[56px] p-0 pr-1 text-right text-[#c8c85a]">{total}</td>
            </tr>
          ))}
        </tbody>
      </table>
      <div className="flex h-5 shrink-0 items-center justify-between border-b border-[#a01e14] bg-[#1e1e1e] pr-1 pl-0.5 text-[#c8c8c8]">
        <h2 className="whitespace-nowrap">主力风向标(2010年09月13日)</h2>
        <svg width="12" height="12"><path d="M6 0 L8 4 L12 4.5 L9 7.5 L10 12 L6 9.5 L2 12 L3 7.5 L0 4.5 L4 4 Z" fill="#ffd21e" /></svg>
      </div>
      <svg viewBox="1274 468 199 556" className="block h-auto w-full shrink-0" fontSize="12" textAnchor="middle" fill="#d2d2d2">
        <Donut cx={1373} cy={640} r={98} outer={0} inner={37} />
        <text x="1374" y="752">当日</text>
        <Donut cx={1323} cy={918} r={48} outer={12} inner={37} />
        <text x="1328" y="981">10日累计</text>
        <Donut cx={1423} cy={918} r={48} outer={-3} inner={9} />
        <text x="1428" y="981">60日累计</text>
      </svg>
      <table className="w-full table-fixed border-t border-[#a01e14] text-left text-[#c8c8c8]">
        <thead>
          <tr className="h-[19px] border-b border-[#a01e14] bg-[#1e1e1e] leading-[18px]">
            <th className="w-[39px] p-0 pl-0.5 font-normal">万手</th>
            {['主动买', '主动卖', '主力买', '主力卖'].map((t) => <th key={t} className="p-0 font-normal">{t}</th>)}
          </tr>
        </thead>
        <tbody>
          {[
            ['当日', '10.95', '10.97', '7.43', '5.53'],
            ['10日', '93.97', '85.40', '49.04', '35.93'],
            ['60日', '275.59', '283.50', '114.08', '104.57'],
          ].map(([day, ...v]) => (
            <tr key={day} className="h-[19px] leading-[19px]">
              <td className="p-0 pl-1.5">{day}</td>
              <td className="p-0 text-[#96281e]">{v[0]}</td>
              <td className="p-0 text-[#1e821e]">{v[1]}</td>
              <td className="p-0 text-[#dc322d]">{v[2]}</td>
              <td className="p-0 text-[#32c832]">{v[3]}</td>
            </tr>
          ))}
        </tbody>
      </table>
    </section>
  )
}

type Cell = [label: string, value: string, unit: string, color: string]
const R = 'text-[#f03c3c]'
const W = 'text-[#d2d2d2]'

const quoteTop: [Cell, Cell][] = [
  [['今开', '9.10', '', R], ['均价', '9.36', '', R]],
  [['最高', '9.55', '', R], ['量比', '1.02', '', R]],
  [['最低', '9.10', '', R], ['市值', '47.6', '亿', W]],
  [['总笔', '12565', '', W], ['每笔', '17.4', '', W]],
  [['外盘', '11.5', '万', R], ['内盘', '10.4', '万', 'text-[#32c832]']],
]
const quoteBottom: [Cell, Cell][] = [
  [['换手', '5.59%', '', W], ['股本', '5.05', '亿', W]],
  [['净资', '5.86', '', W], ['流通', '3.92', '亿', W]],
  [['收益㈡', '0.19', '', W], ['PE[动]', '25.2', '', W]],
]

function QuoteTable({ rows }: { rows: [Cell, Cell][] }) {
  return (
    <table className="w-full table-fixed font-['Roboto','Noto_Sans_CJK_SC',sans-serif] text-sm">
      <tbody>
        {rows.map((row, i) => (
          <tr key={i} className="h-[19px] leading-[19px]">
            {row.map(([label, value, unit, color], j) => (
              <td key={j} className={j === 0 ? 'w-[100px] p-0 pl-0.5' : 'p-0 pr-1 pl-1.5'}>
                <div className="flex items-center justify-between whitespace-nowrap">
                  <span className="text-base leading-[19px] font-light text-[#e6e6e6]">{label}</span>
                  <span className={`font-medium ${color}`}>{value}<span className="font-normal">{unit}</span></span>
                </div>
              </td>
            ))}
          </tr>
        ))}
      </tbody>
    </table>
  )
}

type Tick = [minute: number, price: string, volume: number, side: string, count: number]
const ticks: Tick[] = [
  [57, '9.43', 227, 'B', 21], [57, '9.43', 3, 'B', 3], [57, '9.42', 372, 'S', 11], [57, '9.41', 120, 'S', 2], [57, '9.42', 93, 'B', 4],
  [57, '9.43', 103, 'B', 6], [57, '9.43', 11, 'B', 4], [58, '9.43', 38, 'B', 4], [58, '9.42', 20, 'S', 3], [58, '9.42', 32, 'S', 4],
  [58, '9.42', 5, 'S', 2], [58, '9.43', 124, 'B', 8], [58, '9.42', 20, 'S', 2], [58, '9.42', 10, 'S', 1], [58, '9.42', 25, 'S', 3],
  [58, '9.42', 89, 'S', 11], [58, '9.42', 62, 'S', 4], [58, '9.42', 7, 'S', 2], [58, '9.43', 24, 'B', 4], [58, '9.43', 26, 'B', 4],
  [58, '9.43', 16, 'B', 2], [58, '9.42', 75, 'S', 6], [58, '9.42', 63, 'S', 5], [58, '9.43', 100, 'B', 1], [58, '9.42', 27, 'S', 4],
  [58, '9.42', 22, 'S', 2], [59, '9.43', 48, 'B', 3], [59, '9.43', 20, 'B', 2], [59, '9.43', 50, 'B', 4], [59, '9.43', 10, 'B', 1],
  [59, '9.43', 292, 'B', 14], [59, '9.43', 260, 'B', 15], [59, '9.43', 3, 'S', 1], [59, '9.43', 85, 'S', 2], [59, '9.43', 13, 'S', 2],
  [59, '9.43', 20, 'S', 1], [59, '9.43', 88, 'S', 5], [59, '9.44', 15, 'B', 2], [59, '9.43', 56, 'S', 2], [59, '9.43', 12, 'S', 3],
  [59, '9.44', 203, 'B', 12], [59, '9.44', 239, 'B', 19], [59, '9.43', 82, '', 9], [59, '9.43', 44, 'B', 4], [59, '9.43', 126, 'B', 15],
]

function QuotePanel() {
  return (
    <section className="w-[211px] shrink-0 border-l border-[#b4281e]">
      <div className="flex h-[30px] items-center pl-0.5">
        <div className="flex gap-px font-['Liberation_Serif',serif] text-sm leading-[15px] font-bold text-[#e6141e]">
          <button className="w-[15px] bg-[#c8c8c8]">P</button>
          <button className="w-[15px] bg-[#c8c8c8]">L</button>
        </div>
        <h1 className="flex gap-[3px] pl-1 text-xl leading-7 text-[#1ec8dc]">
          {[...'博汇纸业'].map((ch) => <span key={ch}>{ch}</span>)}
        </h1>
        <span className="pt-0.5 pl-1.5 text-sm text-[#d2d2d2]">600966</span>
      </div>
      <div className="flex h-[25px] items-center border-b border-[#a01e14] pt-0.5 pl-0.5 text-base text-[#ff3232]">
        <span className="w-[76px] text-[17px] font-bold">9.43<span className="pl-0.5 text-[15px] font-light text-[#e6e6e6]">元</span></span>
        <span className="flex-1">▲0.39</span>
        <span>+4.31</span>
      </div>
      <div className="py-0.5">
        <QuoteTable rows={[[['现量', '126', '', R], ['总量', '21.9', '万', W]]]} />
      </div>
      <div className="mb-[3px] flex h-[3px]">
        <div className="w-[112px] bg-[#e63c3c]" />
        <div className="flex-1 bg-[#28c828]" />
      </div>
      <div className="border-b border-[#a01e14]">
        <QuoteTable rows={quoteTop} />
      </div>
      <div className="mb-px border-b border-[#a01e14] pt-0.5">
        <QuoteTable rows={quoteBottom} />
      </div>
      <table className="w-full table-fixed font-['Roboto',sans-serif] text-sm leading-[18px] font-medium">
        <tbody>
          {ticks.map(([minute, price, volume, side, count], i) => (
            <tr key={i} className="h-[18px]">
              <td className="w-[45px] p-0 pl-0.5 text-[#dcdcdc]">14:{minute}</td>
              <td className="w-[59px] p-0 text-right text-[#f03c3c]">{price}</td>
              <td className="w-[59px] p-0 text-right text-[#c8c85a]">{volume}</td>
              <td className={`w-[27px] p-0 text-center ${side === 'B' ? 'text-[#d23c37]' : 'text-[#32c832]'}`}>{side}</td>
              <td className="p-0 pr-0.5 text-right font-normal text-[#8c8c8c]">{count}</td>
            </tr>
          ))}
        </tbody>
      </table>
    </section>
  )
}

export default function App() {
  return (
    <div className="flex h-screen flex-col overflow-hidden bg-black font-['Liberation_Sans','Noto_Sans_CJK_SC',sans-serif] text-xs">
      <MenuBar />
      <ToolBar />
      <main className="flex min-h-0 flex-1">
        <div className="flex min-w-0 flex-1 flex-col">
          <Readings items={priceReadings} first />
          <PriceChart />
          <Readings items={volumeReadings} />
          <VolumeChart />
          <Readings items={macdReadings} />
          <MacdChart />
          <Readings items={cciReadings} />
          <CciChart />
          <DateScale />
          <TabStrip />
        </div>
        <OrderPanel />
        <QuotePanel />
      </main>
    </div>
  )
}
